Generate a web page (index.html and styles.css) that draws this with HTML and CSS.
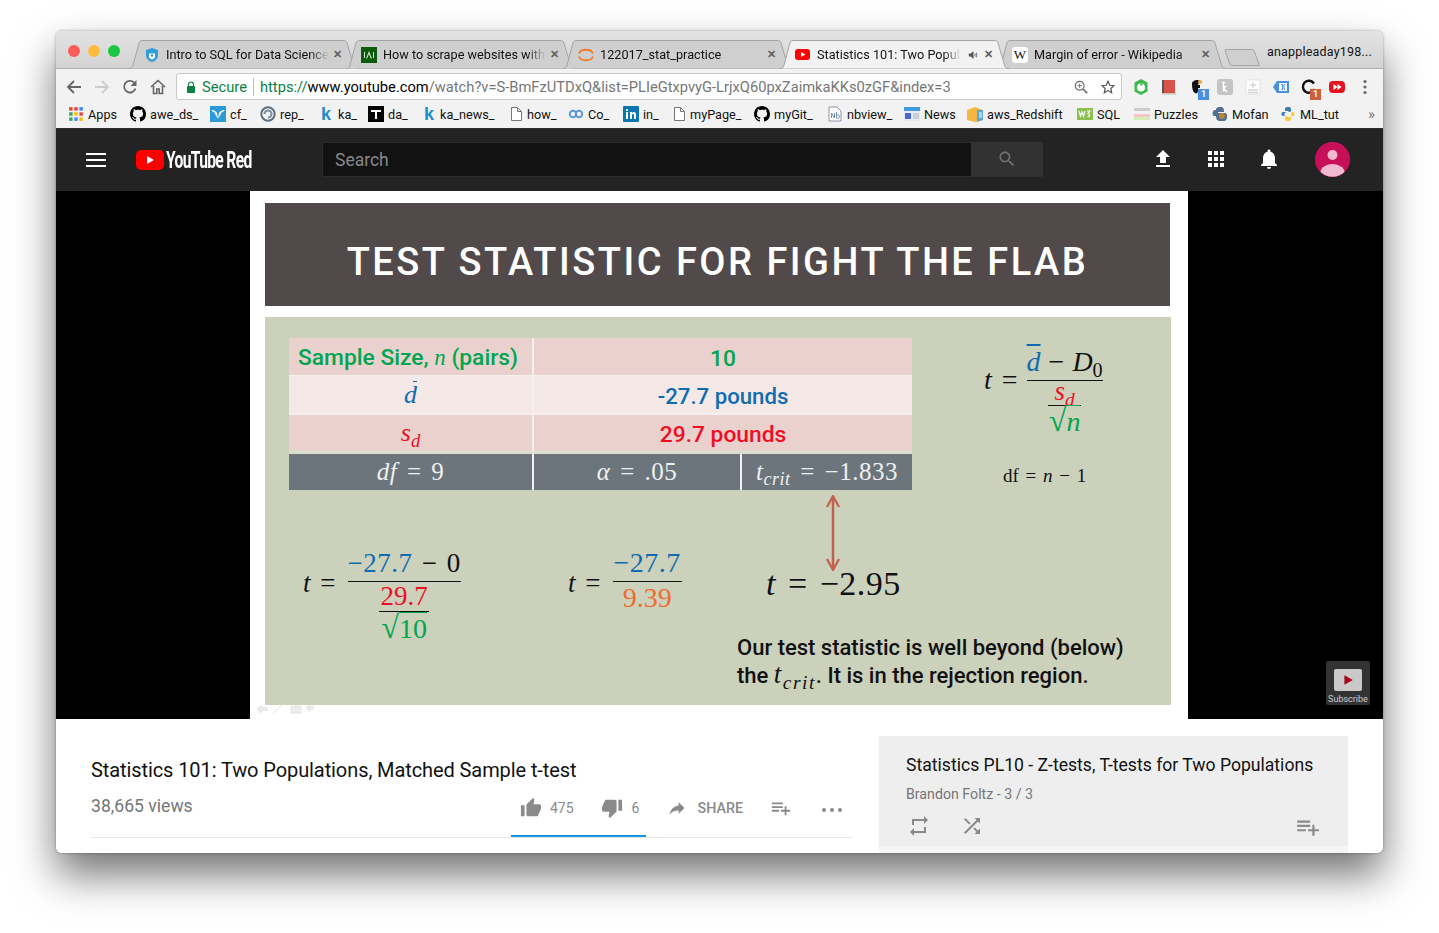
FILE: index.html
```html
<!DOCTYPE html>
<html lang="en">
<head>
<meta charset="UTF-8" />
<meta name="viewport" content="width=device-width, initial-scale=1" />
<title>Statistics 101: Two Populations, Matched Sample t-test</title>
<link rel="stylesheet" href="styles.css">
</head>
<body>

<svg class="sprites" aria-hidden="true">
  <symbol id="tab-shape" viewBox="0 0 229 29" preserveAspectRatio="none">
    <path d="M0 28.5 C3 28.5 3.5 27 4 25 L10 3 C10.5 1 11.5 .5 14 .5 L214 .5 C216.5 .5 217.5 1 218 3 L224.5 25 C225 27 226 28.5 229 28.5" />
  </symbol>
  <symbol id="github" viewBox="0 0 16 16">
    <path d="M8 0C3.58 0 0 3.58 0 8c0 3.54 2.29 6.53 5.47 7.59.4.07.55-.17.55-.38 0-.19-.01-.82-.01-1.49-2.01.37-2.53-.49-2.69-.94-.09-.23-.48-.94-.82-1.13-.28-.15-.68-.52-.01-.53.63-.01 1.08.58 1.23.82.72 1.21 1.87.87 2.33.66.07-.52.28-.87.51-1.07-1.78-.2-3.64-.89-3.64-3.95 0-.87.31-1.59.82-2.15-.08-.2-.36-1.02.08-2.12 0 0 .67-.21 2.2.82.64-.18 1.32-.27 2-.27s1.36.09 2 .27c1.53-1.04 2.2-.82 2.2-.82.44 1.1.16 1.92.08 2.12.51.56.82 1.27.82 2.15 0 3.07-1.87 3.75-3.65 3.95.29.25.54.73.54 1.48 0 1.07-.01 1.93-.01 2.2 0 .21.15.46.55.38A8.01 8.01 0 0016 8c0-4.42-3.58-8-8-8z" />
  </symbol>
  <symbol id="page" viewBox="0 0 13 16">
    <path d="M1.5 1.5H7.5L11.5 5.5V14.5H1.5z M7.5 1.5V5.5H11.5" fill="#fff" stroke="#777" />
  </symbol>
  <symbol id="playlist-add" viewBox="0 0 24 24">
    <path d="M14 10H2v2h12v-2zm0-4H2v2h12V6zm4 8v-4h-2v4h-4v2h4v4h2v-4h4v-2h-4zM2 16h8v-2H2v2z" />
  </symbol>
</svg>

<div class="window">

  <div class="tabstrip">
    <div class="lights">
      <span class="light light-red"></span>
      <span class="light light-yellow"></span>
      <span class="light light-green"></span>
    </div>
    <div class="tabs">
      <div class="tab">
        <svg class="tab-bg"><use href="#tab-shape" /></svg>
        <svg class="favicon" viewBox="0 0 16 16"><path d="M8 1l6 2v5c0 3.5-2.5 6-6 7-3.5-1-6-3.5-6-7V3z" fill="#2f9ed8" /><path d="M5 6.5h6v3c0 1.5-1.5 2.5-3 3-1.5-.5-3-1.5-3-3z" fill="#fff" /><circle cx="8" cy="8.5" r="1.3" fill="#2f9ed8" /></svg>
        <span class="tab-title">Intro to SQL for Data Science</span>
        <span class="tab-close">✕</span>
      </div>
      <div class="tab">
        <svg class="tab-bg"><use href="#tab-shape" /></svg>
        <svg class="favicon" viewBox="0 0 16 16"><rect width="16" height="16" fill="#0c5b0c" /><path d="M8 4l3 7.5H9.8L8 7l-1.8 4.5H5z" fill="#cfe8cf" /><path d="M3.5 5v6M12.5 5v6" stroke="#cfe8cf" /></svg>
        <span class="tab-title">How to scrape websites with</span>
        <span class="tab-close">✕</span>
      </div>
      <div class="tab">
        <svg class="tab-bg"><use href="#tab-shape" /></svg>
        <svg class="favicon" viewBox="0 0 16 16"><path d="M1 6.5C3 1.5 13 1.5 15 6.5M1 9.5C3 14.5 13 14.5 15 9.5" fill="none" stroke="#ef7a2d" stroke-width="1.8" /></svg>
        <span class="tab-title">122017_stat_practice</span>
        <span class="tab-close">✕</span>
      </div>
      <div class="tab tab-active">
        <svg class="tab-bg"><use href="#tab-shape" /></svg>
        <svg class="favicon" viewBox="0 0 16 16"><rect y="2" width="15" height="11" rx="3" fill="#f00" /><path d="M6 5l4.5 2.5L6 10z" fill="#fff" /></svg>
        <span class="tab-title">Statistics 101: Two Popula</span>
        <svg class="tab-sound" viewBox="0 0 14 12"><path d="M1 4h2.5L7 1v10L3.500 8H1z" fill="#555" /><path d="M9 4v4M11 3v6" stroke="#555" /></svg>
        <span class="tab-close">✕</span>
      </div>
      <div class="tab">
        <svg class="tab-bg"><use href="#tab-shape" /></svg>
        <span class="favicon wiki-icon">W</span>
        <span class="tab-title">Margin of error - Wikipedia</span>
        <span class="tab-close">✕</span>
      </div>
      <div class="new-tab"></div>
    </div>
    <div class="account">anappleaday198...</div>
  </div>

  <div class="toolbar">
    <svg class="nav-icon" viewBox="0 0 16 16"><path d="M15 8H2M8 2L2 8l6 6" fill="none" stroke="#666" stroke-width="1.8" /></svg>
    <svg class="nav-icon" viewBox="0 0 16 16"><path d="M1 8h13M8 2l6 6-6 6" fill="none" stroke="#ccc" stroke-width="1.8" /></svg>
    <svg class="nav-icon" viewBox="0 0 16 16"><path d="M13.5 9.5A5.8 5.8 0 1 1 12 3.5" fill="none" stroke="#666" stroke-width="1.8" /><path d="M14.5 1v6h-6z" fill="#666" /></svg>
    <svg class="nav-icon" viewBox="0 0 16 16"><path d="M1 8l7-6.500L15 8M3.500 7v7.500h3.300V10h2.400v4.500h3.300V7" fill="none" stroke="#666" stroke-width="1.6" /></svg>
    <div class="omnibox">
      <svg class="lock" viewBox="0 0 10 12"><path d="M2.500 5V3.500a2.500 2.500 0 0 1 5 0V5" fill="none" stroke="#0b8043" stroke-width="1.2" /><rect y="5" width="10" height="7" rx="1" fill="#0b8043" transform="translate(1 0) scale(.8 1)" /></svg>
      <span class="secure">Secure</span>
      <span class="url"><span class="url-scheme">https://</span><span class="url-host">www.youtube.com</span>/watch?v=S-BmFzUTDxQ&amp;list=PLIeGtxpvyG-LrjxQ60pxZaimkaKKs0zGF&amp;index=3</span>
      <svg class="omni-icon zoom-icon" viewBox="0 0 16 16"><circle cx="6.5" cy="6.5" r="5" fill="none" stroke="#666" stroke-width="1.3" /><path d="M10 10l5 5" stroke="#666" stroke-width="1.8" /><path d="M4 6.500h5M6.500 4v5" stroke="#666" /></svg>
      <svg class="omni-icon" viewBox="0 0 16 16"><path d="M8 1.500l2 4.500 4.800.5-3.600 3.200 1 4.800L8 12.100 3.800 14.500l1-4.800L1.200 6.500 6 6z" fill="none" stroke="#555" stroke-width="1.4" /></svg>
    </div>
    <div class="extensions">
      <svg class="ext" viewBox="0 0 16 16"><path d="M8 0l6.500 3.500v9L8 16l-6.500-3.500v-9z" fill="#3fb950" /><circle cx="8" cy="8.5" r="4" fill="#fff" /><path d="M8 3.500l2 3H7z" fill="#3fb950" /></svg>
      <svg class="ext" viewBox="0 0 16 16"><rect x="1" y="1" width="13" height="13" fill="#d9534a" /><rect x="1" y="1" width="2" height="13" fill="#555" /><path d="M1 14h14v1.500H1z" fill="#c9c4b8" /></svg>
      <span class="ext ext-badged"><svg viewBox="0 0 16 16"><path d="M3 5C3 2 6 1 8 1c3 0 5 1 5 3h-3l-1 2h2v3H9v3c0 2-2 3-3 2-2-1-3-4-3-9z" fill="#111" /><circle cx="11" cy="3" r="2" fill="#e5b33b" /></svg><span class="badge badge-blue">1</span></span>
      <svg class="ext" viewBox="0 0 16 16"><rect width="16" height="16" rx="3" fill="#c4c4c4" /><path d="M5 3.500h3M6.500 3.500v9M9 7l-2.500 2.500L10 13" fill="none" stroke="#fff" stroke-width="1.5" /></svg>
      <svg class="ext" viewBox="0 0 16 16"><rect x="1" y="1" width="14" height="14" fill="#fff" stroke="#e2e2e2" /><path d="M8 3v6M5 6h6M3 11h10M3 13.500h10" stroke="#d4d4d4" stroke-width="1.3" /></svg>
      <svg class="ext" viewBox="0 0 16 16"><path d="M4 2h12v12H4L0 8z" fill="#4a90e2" /><rect x="6" y="4" width="8" height="8" fill="#fff" /><path d="M8 5.500h1.500v5H8M12 5.500h-1v5h1" fill="none" stroke="#4a90e2" /></svg>
      <span class="ext ext-badged"><svg viewBox="0 0 16 16"><path d="M13.5 10A6 6 0 1 1 13 4.5" fill="none" stroke="#111" stroke-width="2.4" /></svg><span class="badge badge-orange">1</span></span>
      <svg class="ext" viewBox="0 0 16 16"><rect y="2" width="16" height="12" rx="4" fill="#e5141c" /><path d="M4.500 5l4 3-4 3zM8.500 5l4 3-4 3z" fill="#fff" /></svg>
      <svg class="ext" viewBox="0 0 16 16"><circle cx="8" cy="2.5" r="1.6" fill="#666" /><circle cx="8" cy="8" r="1.6" fill="#666" /><circle cx="8" cy="13.5" r="1.6" fill="#666" /></svg>
    </div>
  </div>

  <div class="bookmarks">
    <div class="bookmark">
      <svg class="bm-icon" viewBox="0 0 14 14"><rect x="1" y="1" width="3" height="3" fill="#ea4335" /><rect x="5.5" y="1" width="3" height="3" fill="#ea4335" /><rect x="10" y="1" width="3" height="3" fill="#4285f4" /><rect x="1" y="5.5" width="3" height="3" fill="#34a853" /><rect x="5.5" y="5.5" width="3" height="3" fill="#fbbc05" /><rect x="10" y="5.5" width="3" height="3" fill="#ea4335" /><rect x="1" y="10" width="3" height="3" fill="#34a853" /><rect x="5.5" y="10" width="3" height="3" fill="#4285f4" /><rect x="10" y="10" width="3" height="3" fill="#fbbc05" /></svg>
      Apps
    </div>
    <div class="bookmark"><svg class="bm-icon"><use href="#github" /></svg>awe_ds_</div>
    <div class="bookmark">
      <svg class="bm-icon" viewBox="0 0 16 16"><rect width="16" height="16" fill="#2b9ad6" /><path d="M1 4c3 0 5 1 6 3l1 6 1-6c1-2 3-3 6-3-2 2-3 2-4 3 0 2-2 4-3 6-1-2-3-4-3-6-1-1-2-1-4-3z" fill="#fff" /></svg>
      cf_
    </div>
    <div class="bookmark">
      <svg class="bm-icon" viewBox="0 0 16 16"><circle cx="8" cy="8" r="6.7" fill="none" stroke="#5c7080" stroke-width="2" /><path d="M4.500 8a3.500 3.500 0 1 1 3.500 3.500" fill="none" stroke="#7d8d9a" stroke-width="2" /></svg>
      rep_
    </div>
    <div class="bookmark"><span class="bm-icon k-icon">k</span>ka_</div>
    <div class="bookmark">
      <svg class="bm-icon" viewBox="0 0 16 16"><rect width="16" height="16" fill="#000" /><path d="M3 4h10v2H9v7H7V6H3z" fill="#fff" /></svg>
      da_
    </div>
    <div class="bookmark"><span class="bm-icon k-icon k-news">k</span>ka_news_</div>
    <div class="bookmark"><svg class="bm-icon bm-page"><use href="#page" /></svg>how_</div>
    <div class="bookmark">
      <svg class="bm-icon" viewBox="0 0 16 16"><circle cx="5" cy="8" r="3.2" fill="none" stroke="#5b9bd5" stroke-width="2" /><circle cx="11" cy="8" r="3.2" fill="none" stroke="#5b9bd5" stroke-width="2" /></svg>
      Co_
    </div>
    <div class="bookmark">
      <svg class="bm-icon" viewBox="0 0 16 16"><rect width="16" height="16" rx="1" fill="#0a76b4" /><path d="M3 6h2v7H3zM3 3h2v2H3zM7 6h2v1c1-1.500 4-1.500 4 1.500V13h-2V9c0-1.500-2-1.500-2 0v4H7z" fill="#fff" /></svg>
      in_
    </div>
    <div class="bookmark"><svg class="bm-icon bm-page"><use href="#page" /></svg>myPage_</div>
    <div class="bookmark"><svg class="bm-icon"><use href="#github" /></svg>myGit_</div>
    <div class="bookmark">
      <svg class="bm-icon" viewBox="0 0 16 16"><path d="M2 1h8l4 4v10H2z" fill="#fff" stroke="#8a94a6" /><path d="M4.500 12V7l3 5V7M9.500 6v6c1 .5 3 .5 3-1.500s-2-2-3-1" fill="none" stroke="#6f8fb3" /></svg>
      nbview_
    </div>
    <div class="bookmark">
      <svg class="bm-icon" viewBox="0 0 16 16"><rect y="1" width="16" height="14" fill="#e6ecf5" /><rect y="1" width="16" height="4" fill="#3f9ae0" /><rect x="1" y="7" width="6" height="6" fill="#4a66c9" /><path d="M9 8h6M9 10h6M9 12h6" stroke="#a9b2c4" /></svg>
      News
    </div>
    <div class="bookmark">
      <svg class="bm-icon" viewBox="0 0 16 16"><path d="M0 4l8-3 8 3v10l-8 2-8-2z" fill="#f5b742" /><path d="M10 4h6v10l-6 2z" fill="#5da6d8" /><path d="M12 7h3M12 9h3M12 11h3" stroke="#fff" /></svg>
      aws_Redshift
    </div>
    <div class="bookmark">
      <svg class="bm-icon" viewBox="0 0 16 16"><rect y="2" width="16" height="12" fill="#8cc152" /><path d="M2 5l1.500 5L5 6l1.500 4L8 5M10 5h3l-2 2.500c2 0 2.500 3-.5 3" fill="none" stroke="#fff" stroke-width="1.2" /></svg>
      SQL
    </div>
    <div class="bookmark">
      <svg class="bm-icon" viewBox="0 0 16 16"><rect y="2" width="16" height="3" fill="#ccc" /><rect y="5" width="16" height="3" fill="#f2f2f2" /><rect y="8" width="16" height="3" fill="#f5c6c6" /><rect y="11" width="16" height="3" fill="#d5efb8" /></svg>
      Puzzles
    </div>
    <div class="bookmark">
      <svg class="bm-icon" viewBox="0 0 16 16"><path d="M8 1c4 0 4 2 4 5H6v1h7c3 0 3 8-1 8H9c-4 0-5-2-5-5H2C0 10 0 4 3 4h1c0-2 1-3 4-3z" fill="#51708f" /><circle cx="10" cy="10" r="3" fill="#b5893a" /></svg>
      Mofan
    </div>
    <div class="bookmark">
      <svg class="bm-icon" viewBox="0 0 16 16"><path d="M8 1c-3 0-3 1-3 3v1h3.500v1H3C1 6 1 10 3 10h1.500V8c0-1 1-2 2-2h3c1 0 1.500-1 1.500-2V3c0-1.500-1-2-3-2z" fill="#3b7cb5" /><path d="M8 15c3 0 3-1 3-3v-1H7.500v-1H13c2 0 2-4 0-4h-1.500v2c0 1-1 2-2 2h-3c-1 0-1.500 1-1.500 2v1c0 1.500 1 2 3 2z" fill="#f5cd45" /></svg>
      ML_tut
    </div>
    <div class="bookmark bm-more">»</div>
  </div>

  <header class="masthead">
    <div class="hamburger"><span></span><span></span><span></span></div>
    <svg class="yt-logo" viewBox="0 0 28 20"><rect width="28" height="20" rx="5" fill="#f00" /><path d="M11 6l7 4-7 4z" fill="#fff" /></svg>
    <span class="yt-word">YouTube Red</span>
    <div class="search">
      <div class="search-input">Search</div>
      <div class="search-btn"><svg class="icon-20" viewBox="0 0 24 24"><path d="M15.5 14h-.79l-.28-.27C15.41 12.59 16 11.11 16 9.5 16 5.91 13.09 3 9.5 3S3 5.91 3 9.5 5.91 16 9.5 16c1.61 0 3.09-.59 4.23-1.57l.27.28v.79l5 4.99L20.49 19l-4.99-5zm-6 0C7.01 14 5 11.99 5 9.5S7.01 5 9.5 5 14 7.01 14 9.5 11.99 14 9.5 14z" /></svg></div>
    </div>
    <div class="mast-icons">
      <svg class="icon-24" viewBox="0 0 24 24"><path d="M9 16h6v-6h4l-7-7-7 7h4zm-4 2h14v2H5z" /></svg>
      <svg class="icon-24" viewBox="0 0 24 24"><path d="M4 8h4V4H4v4zm6 12h4v-4h-4v4zm-6 0h4v-4H4v4zm0-6h4v-4H4v4zm6 0h4v-4h-4v4zm6-10v4h4V4h-4zm-6 4h4V4h-4v4zm6 6h4v-4h-4v4zm0 6h4v-4h-4v4z" /></svg>
      <svg class="icon-24" viewBox="0 0 24 24"><path d="M12 22c1.1 0 2-.9 2-2h-4c0 1.1.9 2 2 2zm6-6v-5c0-3.07-1.63-5.64-4.5-6.32V4c0-.83-.67-1.5-1.5-1.5s-1.5.67-1.5 1.5v.68C7.64 5.36 6 7.92 6 11v5l-2 2v1h16v-1l-2-2z" /></svg>
    </div>
    <svg class="avatar" viewBox="0 0 35 35"><circle cx="17.5" cy="17.5" r="17.5" fill="#c8105a" /><circle cx="17.5" cy="13" r="5" fill="#f2b8cd" /><path d="M5.5 30c0-5 7-8 12-8s12 3 12 8a17.5 17.5 0 0 1-24 0z" fill="#f2b8cd" /></svg>
  </header>

  <section class="player">
    <div class="slide">
      <h1 class="slide-title">TEST STATISTIC FOR FIGHT THE FLAB</h1>
      <div class="panel">
        <table class="stats">
          <colgroup>
            <col class="col-label">
            <col class="col-alpha">
            <col class="col-crit">
          </colgroup>
          <tr class="row-size">
            <td class="c-green cell-size"><b>Sample Size, <i class="math">n</i> (pairs)</b></td>
            <td colspan="2" class="c-green"><b>10</b></td>
          </tr>
          <tr class="row-mean">
            <td class="c-blue math-cell"><i class="dbar">d</i></td>
            <td colspan="2" class="c-blue"><b>-27.7 pounds</b></td>
          </tr>
          <tr class="row-sd">
            <td class="c-red math-cell"><i>s<sub>d</sub></i></td>
            <td colspan="2" class="c-red"><b>29.7 pounds</b></td>
          </tr>
          <tr class="row-grey">
            <td><i>df</i> = 9</td>
            <td><i>α</i> = .05</td>
            <td><i>t<sub>crit</sub></i> = −1.833</td>
          </tr>
        </table>

        <div class="formula formula-general">
          <span class="lhs"><i>t</i> =</span>
          <span class="frac">
            <span class="num"><i class="bar c-blue">d</i> − <i>D</i><sub>0</sub></span>
            <span class="frac-inner">
              <span class="inner-num c-red"><i>s<sub>d</sub></i></span>
              <span class="inner-den c-green"><span class="radical">√</span><i class="root">n</i></span>
            </span>
          </span>
        </div>
        <div class="formula formula-df">df = <i>n</i> − 1</div>

        <div class="formula formula-a">
          <span class="lhs"><i>t</i> =</span>
          <span class="frac">
            <span class="num"><span class="c-blue">−27.7</span> − 0</span>
            <span class="frac-inner">
              <span class="inner-num c-red">29.7</span>
              <span class="inner-den c-green"><span class="radical">√</span><span class="root">10</span></span>
            </span>
          </span>
        </div>
        <div class="formula formula-b">
          <span class="lhs"><i>t</i> =</span>
          <span class="frac">
            <span class="num c-blue">−27.7</span>
            <span class="den c-orange">9.39</span>
          </span>
        </div>
        <div class="formula formula-c"><i>t</i> = −2.95</div>

        <svg class="reject-arrow" viewBox="0 0 14 76"><path d="M7 3V73" fill="none" stroke="#c0614f" stroke-width="2.5" /><path d="M1 12L7 1l6 11M1 64L7 75l6-11" fill="none" stroke="#c0614f" stroke-width="2.2" /></svg>

        <p class="conclusion">Our test statistic is well beyond (below)<br>the <i class="math">t<sub>crit</sub></i>. It is in the rejection region.</p>
      </div>
      <div class="slide-tools">
        <svg viewBox="0 0 60 12"><path d="M2 6l4-4v2.500h6v3H6V10zM18 10L27 2M36 3h10v7H36zM52 3h6v3h-3v2.500L52 6z" fill="#ececec" stroke="#e4e4e4" /></svg>
      </div>
    </div>
    <div class="watermark">
      <div class="watermark-box"><svg viewBox="0 0 10 10"><path d="M2 1l7 4-7 4z" fill="#a8071a" /></svg></div>
      <span>Subscribe</span>
    </div>
  </section>

  <section class="info">
    <div class="primary">
      <h2 class="video-title">Statistics 101: Two Populations, Matched Sample t-test</h2>
      <div class="meta">
        <span class="views">38,665 views</span>
        <div class="actions">
          <div class="action action-like">
            <svg class="icon-22" viewBox="0 0 24 24"><path d="M1 21h4V9H1v12zm22-11c0-1.1-.9-2-2-2h-6.31l.95-4.57.03-.32c0-.41-.17-.79-.44-1.06L14.17 1 7.59 7.59C7.22 7.95 7 8.45 7 9v10c0 1.1.9 2 2 2h9c.83 0 1.54-.5 1.84-1.22l3.02-7.05c.09-.23.14-.47.14-.73v-2z" /></svg>
            <span>475</span>
          </div>
          <div class="action action-dislike">
            <svg class="icon-22" viewBox="0 0 24 24"><path d="M15 3H6c-.83 0-1.54.5-1.84 1.22l-3.02 7.05c-.09.23-.14.47-.14.73v2c0 1.1.9 2 2 2h6.31l-.95 4.57-.03.32c0 .41.17.79.44 1.06L9.83 23l6.59-6.59c.36-.36.58-.86.58-1.41V5c0-1.1-.9-2-2-2zm4 0v12h4V3h-4z" /></svg>
            <span>6</span>
          </div>
          <div class="action action-share">
            <svg class="icon-20" viewBox="0 0 24 24"><path d="M14 9V5l7 7-7 7v-4.1c-5 0-8.5 1.6-11 5.1 1-5 4-10 11-11z" /></svg>
            <span>SHARE</span>
          </div>
          <svg class="icon-22 action-add"><use href="#playlist-add" /></svg>
          <div class="dots"><span></span><span></span><span></span></div>
        </div>
      </div>
    </div>
    <aside class="playlist">
      <h3 class="playlist-title">Statistics PL10 - Z-tests, T-tests for Two Populations</h3>
      <div class="playlist-by">Brandon Foltz - 3 / 3</div>
      <div class="playlist-controls">
        <svg class="icon-24" viewBox="0 0 24 24"><path d="M7 7h10v3l4-4-4-4v3H5v6h2V7zm10 10H7v-3l-4 4 4 4v-3h12v-6h-2v4z" /></svg>
        <svg class="icon-24" viewBox="0 0 24 24"><path d="M10.59 9.17L5.41 4 4 5.41l5.17 5.17 1.42-1.41zM14.5 4l2.04 2.04L4 18.59 5.41 20 17.96 7.46 20 9.5V4h-5.5zm.33 9.41l-1.41 1.41 3.13 3.13L14.5 20H20v-5.5l-2.04 2.04-3.13-3.13z" /></svg>
        <svg class="playlist-add"><use href="#playlist-add" /></svg>
      </div>
    </aside>
  </section>

</div>

</body>
</html>
```

FILE: styles.css
```css
html, body {
  margin: 0;
  height: 933px;
  background: #fff;
  overflow: hidden;
}
body {
  padding-top: 31px;
  box-sizing: border-box;
  font-family: Roboto, 'Liberation Sans', sans-serif;
  color: #111;
}
.sprites {
  position: absolute;
  width: 0;
  height: 0;
}

/* browser window */
.window {
  width: 1327px;
  height: 822px;
  margin-left: 56px;
  border-radius: 6px;
  overflow: hidden;
  display: flex;
  flex-direction: column;
  box-shadow: 0 22px 42px rgba(0, 0, 0, .55), 0 0 3px rgba(0, 0, 0, .35);
}
.tabstrip {
  height: 37px;
  flex: none;
  display: flex;
  background: linear-gradient(#e3e3e3, #d3d3d3);
  border-bottom: 1px solid #aeaeae;
}
.lights {
  display: flex;
  gap: 8px;
  width: 73px;
  padding: 14px 0 0 12px;
  box-sizing: border-box;
}
.light {
  width: 12px;
  height: 12px;
  border-radius: 50%;
}
.light-red { background: #fc5b57; }
.light-yellow { background: #fdbc40; }
.light-green { background: #19c840; }
.tabs {
  display: flex;
  padding-top: 9px;
}
.tab {
  position: relative;
  width: 229px;
  height: 29px;
  margin-right: -12px;
  padding: 0 13px 0 15px;
  box-sizing: border-box;
  display: flex;
  align-items: center;
  font-size: 12.7px;
  white-space: nowrap;
}
.tab-bg {
  position: absolute;
  left: 0;
  top: 0;
  width: 229px;
  height: 29px;
  fill: #cfcfcf;
  stroke: #a4a4a4;
  overflow: visible;
}
.tab-active {
  z-index: 2;
}
.tab-active .tab-bg {
  fill: #f2f2f2;
}
.favicon {
  position: relative;
  width: 16px;
  height: 16px;
  flex: none;
  margin-right: 6px;
}
.wiki-icon {
  background: #fff;
  border-radius: 3px;
  font: 13px/16px 'Liberation Serif', serif;
  text-align: center;
}
.tab-title {
  position: relative;
  flex: 1;
  overflow: hidden;
  -webkit-mask-image: linear-gradient(90deg, #000 88%, transparent);
  mask-image: linear-gradient(90deg, #000 88%, transparent);
}
.tab-close {
  position: relative;
  width: 12px;
  margin-left: 4px;
  font-size: 11px;
  font-weight: 700;
  color: #5f5f5f;
}
.tab-sound {
  position: relative;
  width: 11px;
  height: 10px;
  margin: 0 1px 0 7px;
}
.new-tab {
  width: 28px;
  height: 15px;
  margin: 9px 0 0 13px;
  background: #cfcfcf;
  border: 1px solid #a4a4a4;
  border-radius: 2px;
  transform: skewX(20deg);
}
.account {
  margin-left: auto;
  padding: 13px 11px 0 0;
  font-size: 12.5px;
  letter-spacing: .2px;
}
.toolbar {
  height: 35px;
  flex: none;
  display: flex;
  align-items: center;
  padding: 0 0 0 10px;
  background: #f2f2f2;
}
.nav-icon {
  width: 16px;
  height: 16px;
  flex: none;
  margin-right: 12px;
}
.omnibox {
  width: 946px;
  height: 27px;
  margin-left: -2px;
  box-sizing: border-box;
  display: flex;
  align-items: center;
  padding: 0 6px 0 9px;
  background: #fff;
  border: 1px solid #c8c8c8;
  border-radius: 3px;
  font-size: 14.7px;
  white-space: nowrap;
}
.lock {
  width: 10px;
  height: 12px;
  margin-right: 6px;
}
.secure {
  color: #0b8043;
  padding-right: 6px;
  margin-right: 6px;
  border-right: 1px solid #bbb;
  line-height: 18px;
}
.url {
  flex: 1;
  color: #767676;
}
.url-scheme { color: #0b8043; }
.url-host { color: #000; }
.omni-icon {
  width: 14px;
  height: 14px;
  margin-left: 13px;
}
.extensions {
  display: flex;
  align-items: center;
  padding-left: 11px;
  gap: 12px;
}
.ext {
  width: 16px;
  height: 16px;
  position: relative;
  display: block;
}
.ext svg {
  display: block;
}
.badge {
  position: absolute;
  right: -4px;
  bottom: -5px;
  width: 11px;
  height: 11px;
  color: #fff;
  font-size: 9px;
  font-weight: 700;
  line-height: 11px;
  text-align: center;
}
.badge-blue { background: #4a90e2; }
.badge-orange { background: #d0603c; }
.bookmarks {
  height: 25px;
  flex: none;
  box-sizing: border-box;
  padding: 0 0 4px 12px;
  display: grid;
  grid-template-columns: 62px 80px 50px 58px 50px 54px 88px 58px 55px 50px 81px 73px 77px 63px 110px 57px 78px 68px 88px 20px;
  align-items: center;
  background: #f2f2f2;
  border-bottom: 1px solid #2c2c2c;
  font-size: 12.7px;
  white-space: nowrap;
}
.bookmark {
  display: flex;
  align-items: center;
  gap: 4px;
}
.bm-icon {
  width: 16px;
  height: 16px;
  flex: none;
}
.bm-page {
  width: 13px;
}
.k-icon {
  color: #1e8ec9;
  font: 700 18px/16px 'Liberation Sans', sans-serif;
  text-align: center;
}
.k-news {
  width: 14px;
}
.bm-more {
  color: #777;
  font-size: 15px;
}

/* youtube top bar */
.masthead {
  height: 62px;
  flex: none;
  box-sizing: border-box;
  padding: 0 0 2px 30px;
  display: flex;
  align-items: center;
  background: #232323;
}
.hamburger {
  width: 20px;
  margin-top: 2px;
  display: flex;
  flex-direction: column;
  gap: 4px;
}
.hamburger span {
  height: 2px;
  background: #fff;
}
.yt-logo {
  width: 28px;
  height: 20px;
  margin: 2px 0 0 30px;
  flex: none;
}
.yt-word {
  width: 86px;
  margin: 2px 0 0 2px;
  color: #fff;
  font-size: 23px;
  font-weight: 700;
  letter-spacing: -1px;
  white-space: nowrap;
  transform: scaleX(.68);
  transform-origin: left center;
}
.search {
  width: 721px;
  height: 35px;
  margin-left: 70px;
  display: flex;
  font-size: 17.5px;
}
.search-input {
  flex: 1;
  padding-left: 12px;
  line-height: 35px;
  color: #888;
  background: #121212;
  border: 1px solid #2c2c2c;
  border-right: none;
  border-radius: 2px 0 0 2px;
}
.search-btn {
  width: 72px;
  display: flex;
  align-items: center;
  justify-content: center;
  background: #323232;
  border-radius: 0 2px 2px 0;
  fill: #6f6f6f;
}
.icon-20 {
  width: 20px;
  height: 20px;
  flex: none;
}
.icon-22 {
  width: 22px;
  height: 22px;
  flex: none;
}
.icon-24 {
  width: 24px;
  height: 24px;
  flex: none;
}
.mast-icons {
  display: flex;
  gap: 29px;
  margin-left: 108px;
  fill: #fff;
}
.avatar {
  width: 35px;
  height: 35px;
  margin-left: 34px;
}

/* video */
.player {
  position: relative;
  height: 528px;
  flex: none;
  background: #000;
}
.slide {
  position: relative;
  width: 938px;
  height: 528px;
  margin-left: 194px;
  box-sizing: border-box;
  padding: 12px 0 0 15px;
  background: #fff;
}
.slide-title {
  width: 905px;
  height: 103px;
  margin: 0;
  background: #524a4a;
  color: #fff;
  font-size: 38px;
  font-weight: 500;
  letter-spacing: 2.5px;
  line-height: 118px;
  text-align: center;
}
.panel {
  position: relative;
  width: 906px;
  height: 388px;
  margin-top: 11px;
  background: #ccd1bb;
  font-family: 'Liberation Serif', serif;
}
.stats {
  position: absolute;
  left: 24px;
  top: 21px;
  width: 623px;
  border-collapse: separate;
  border-spacing: 0;
  table-layout: fixed;
  font-size: 22.8px;
  text-align: center;
}
.col-label { width: 245px; }
.col-alpha { width: 208px; }
.col-crit { width: 170px; }
.stats td {
  padding: 0;
  box-sizing: border-box;
  border-right: 2px solid #f6f1ef;
}
.stats td:last-child { border-right: none; }
.stats td[colspan] { padding-top: 3px; }
.stats .cell-size { padding: 2px 5px 0 0; }
.stats .math-cell { padding-top: 1px; }
.stats b {
  font-family: Roboto, sans-serif;
  font-weight: 500;
}
.row-size td {
  height: 38px;
  background: #ead1cd;
  border-bottom: 1px solid #f6f1ef;
}
.row-mean td {
  height: 39px;
  background: #f5e9e8;
  border-bottom: 2px solid #f6f1ef;
  font-size: 22.2px;
}
.row-sd td {
  height: 39px;
  background: #ead1cd;
  border-bottom: 4px solid #dcdcd0;
}
.row-grey td {
  height: 36px;
  background: #6c757b;
  color: #eef0f0;
  font-size: 25px;
  letter-spacing: .5px;
  word-spacing: 3px;
}
.stats .math-cell { font-size: 26px; }
.c-green { color: #00a651; }
.c-blue { color: #0f6cb0; }
.c-red { color: #ee0f25; }
.c-orange { color: #ee6c30; }
.bar { text-decoration: overline; }
.dbar {
  position: relative;
}
.dbar::after {
  content: "";
  position: absolute;
  right: 0;
  top: 1px;
  width: 4px;
  height: 1px;
  background: #0f6cb0;
}
sub {
  font-size: .72em;
  line-height: 0;
  vertical-align: -.3em;
}

/* formulas sit on the slide where the author dropped them */
.formula {
  position: absolute;
  display: flex;
  align-items: flex-start;
  gap: 12px;
  color: #111;
  white-space: nowrap;
}
.lhs {
  line-height: 32px;
  word-spacing: 3px;
}
.frac {
  display: inline-flex;
  flex-direction: column;
  align-items: stretch;
  text-align: center;
}
.frac > .num {
  line-height: 36px;
  border-bottom: 1.5px solid #111;
  word-spacing: 2px;
  letter-spacing: .5px;
}
.frac-inner {
  display: flex;
  flex-direction: column;
  align-items: center;
}
.inner-num {
  padding: 0 1px;
  line-height: 29px;
  border-bottom: 1.5px solid #111;
}
.inner-den {
  line-height: 34px;
}
.radical {
  font-size: 1.15em;
  line-height: 0;
}
.root {
  border-top: 1.5px solid currentColor;
}
.formula-general {
  left: 719px;
  top: 27px;
  font-size: 28px;
  gap: 9px;
}
.formula-general .lhs { margin-top: 20px; }
.formula-general .num {
  word-spacing: 1px;
  letter-spacing: 0;
}
.formula-general .inner-num {
  width: 33px;
  box-sizing: border-box;
  padding: 0 0 4px;
  font-size: 27px;
  line-height: 20px;
}
.formula-general .inner-den {
  padding-top: 1px;
  font-size: 28px;
  line-height: 30px;
}
.formula-df {
  display: block;
  left: 738px;
  top: 148px;
  font-size: 19px;
  word-spacing: 2px;
}
.formula-a {
  left: 38px;
  top: 228px;
  font-size: 27px;
}
.formula-a .lhs { margin-top: 22px; }
.formula-a .inner-den { font-size: 28px; }
.formula-b {
  left: 303px;
  top: 228px;
  font-size: 27px;
}
.formula-b .lhs { margin-top: 22px; }
.formula-b .num {
  padding: 0 1px;
  font-size: 28px;
}
.den {
  font-size: 28px;
  line-height: 32px;
}
.formula-c {
  display: block;
  left: 501px;
  top: 248px;
  font-size: 34px;
  word-spacing: 3px;
  letter-spacing: .5px;
}
.reject-arrow {
  position: absolute;
  left: 561px;
  top: 178px;
  width: 14px;
  height: 76px;
}
.conclusion {
  position: absolute;
  left: 472px;
  top: 317px;
  margin: 0;
  font-family: Roboto, sans-serif;
  font-size: 22px;
  font-weight: 500;
  line-height: 28px;
  white-space: nowrap;
}
.math {
  font-family: 'Liberation Serif', serif;
  font-weight: 400;
}
.conclusion .math {
  font-size: 27px;
  line-height: 0;
  letter-spacing: 1.5px;
}
.slide-tools {
  position: absolute;
  left: 5px;
  bottom: 4px;
  width: 60px;
  height: 12px;
}
.slide-tools svg {
  display: block;
}
.watermark {
  position: absolute;
  right: 13px;
  bottom: 14px;
  width: 44px;
  height: 44px;
  display: flex;
  flex-direction: column;
  align-items: center;
  background: #333;
  border-radius: 2px;
  color: #ccc;
  font-size: 9px;
  line-height: 10px;
}
.watermark-box {
  width: 28px;
  height: 22px;
  margin: 8px 0 3px;
  display: flex;
  align-items: center;
  justify-content: center;
  background: #c9c9c9;
  border-radius: 2px;
}
.watermark-box svg {
  width: 12px;
  height: 12px;
}

/* below the video */
.info {
  flex: 1;
  display: flex;
  background: #fff;
  padding: 17px 35px 0;
  min-height: 0;
}
.primary {
  width: 761px;
  flex: none;
}
.video-title {
  margin: 19px 0 0;
  font-size: 20px;
  font-weight: 400;
  line-height: 30px;
  letter-spacing: -.09px;
  white-space: nowrap;
}
.meta {
  display: flex;
  justify-content: space-between;
  height: 52px;
  box-sizing: border-box;
  margin-top: 1px;
  border-bottom: 1px solid #e8e8e8;
}
.views {
  padding-top: 8px;
  font-size: 17.6px;
  line-height: 24px;
  color: #767676;
}
.actions {
  position: relative;
  width: 341px;
  flex: none;
  box-sizing: border-box;
  display: flex;
  align-items: flex-start;
  padding-top: 10px;
  color: #8a8a8a;
  fill: #8a8a8a;
  font-size: 14px;
}
.actions::after {
  content: "";
  position: absolute;
  left: 0;
  bottom: 0;
  width: 135px;
  height: 2px;
  background: #0f97e0;
}
.action {
  display: flex;
  align-items: center;
  height: 24px;
  gap: 8px;
}
.action-like { margin-left: 9px; }
.action-dislike {
  margin-left: 27px;
  gap: 9px;
}
.action-share {
  margin-left: 28px;
  gap: 10px;
  font-size: 14.3px;
  font-weight: 500;
}
.action-add {
  margin: 1px 0 0 27px;
}
.dots {
  display: flex;
  gap: 4px;
  margin: 12px 0 0 30px;
}
.dots span {
  width: 4px;
  height: 4px;
  border-radius: 50%;
  background: #8a8a8a;
}
.playlist {
  width: 469px;
  height: 117px;
  flex: none;
  margin-left: 27px;
  box-sizing: border-box;
  padding: 17px 27px 0;
  background: linear-gradient(#eee 110px, #f5f5f5 110px);
}
.playlist-title {
  margin: 0;
  font-size: 17.6px;
  font-weight: 400;
  line-height: 24px;
  white-space: nowrap;
}
.playlist-by {
  margin-top: 8px;
  font-size: 14.2px;
  line-height: 18px;
  color: #767676;
}
.playlist-controls {
  display: flex;
  gap: 29px;
  margin-top: 11px;
  margin-left: 1px;
  fill: #8a8a8a;
}
.playlist-add {
  width: 26px;
  height: 26px;
  margin-left: auto;
}
```
